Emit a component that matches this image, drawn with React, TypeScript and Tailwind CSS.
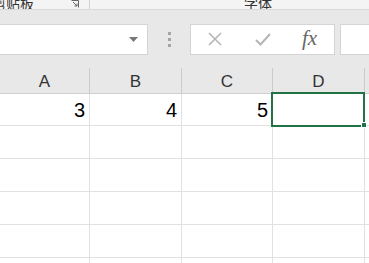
import React from "react";

const cols = [
  { key: "A", width: "w-[90px]", value: "3" },
  { key: "B", width: "w-[92px]", value: "4" },
  { key: "C", width: "w-[91px]", value: "5" },
  { key: "D", width: "w-[92px]", value: "" },
];

const App: React.FC = () => {
  return (
    <div
      className="relative w-[369px] h-[263px] overflow-hidden bg-white"
      style={{ fontFamily: '"Liberation Sans", "Noto Sans CJK SC", sans-serif' }}
    >
      {/* ribbon bottom edge */}
      <div className="flex h-[10px] items-end overflow-hidden border-b border-[#d9d9d9] bg-[#f4f4f4] text-[14px] leading-[14px] text-[#333]">
        <div className="flex h-full w-[90px] items-end border-r border-[#d2d2d2]">
          <span className="-ml-[8px] mb-[-2px]">剪贴板</span>
          <svg className="ml-[37px] mb-[1px]" width="8" height="8" viewBox="0 0 8 8" fill="none" stroke="#666" strokeWidth="1">
            <path d="M0.5 0.5H7.5V7.5" />
            <path d="M2 2L6 6M3.5 6H6V3.5" />
          </svg>
        </div>
        <span className="ml-[154px] mb-[-2px]">字体</span>
      </div>

      {/* formula bar */}
      <div className="flex h-[58px] items-center bg-[#e8e8e8]">
        <div className="flex h-[31px] w-[148px] items-center justify-end border border-l-0 border-[#d4d4d4] bg-white pr-[9px]">
          <svg width="9" height="5" viewBox="0 0 9 5">
            <path d="M0 0H9L4.5 5Z" fill="#777" />
          </svg>
        </div>
        <div className="flex w-[42px] flex-col items-center gap-[3px]">
          <span className="h-[3px] w-[3px] bg-[#a5a5a5]" />
          <span className="h-[3px] w-[3px] bg-[#a5a5a5]" />
          <span className="h-[3px] w-[3px] bg-[#a5a5a5]" />
        </div>
        <div className="flex h-[31px] w-[145px] items-center border border-[#d4d4d4] bg-white">
          <svg className="ml-[17px]" width="14" height="14" viewBox="0 0 14 14" stroke="#b5b5b5" strokeWidth="1.6">
            <path d="M1 1L13 13M13 1L1 13" />
          </svg>
          <svg className="ml-[33px]" width="16" height="13" viewBox="0 0 16 13" fill="none" stroke="#b5b5b5" strokeWidth="2">
            <path d="M1 7L5.5 11.5L15 1" />
          </svg>
          <span
            className="ml-[31px] text-[21px] italic text-[#666]"
            style={{ fontFamily: '"Liberation Serif", serif' }}
          >
            fx
          </span>
        </div>
        <div className="ml-[5px] h-[31px] flex-1 border border-r-0 border-[#d4d4d4] bg-white" />
      </div>

      {/* column headers */}
      <div className="flex h-[26px] border-b border-[#cfcfcf] bg-[#e8e8e8]">
        {cols.map((c) => (
          <div
            key={c.key}
            className={`${c.width} flex shrink-0 items-end justify-center border-r border-[#cbcbcb] pb-[2px] text-[17px] leading-[18px] text-[#333]`}
          >
            {c.key}
          </div>
        ))}
        <div className="flex-1" />
      </div>

      {/* grid */}
      {[0, 1, 2, 3, 4, 5].map((r) => (
        <div
          key={r}
          className={`flex ${r === 0 ? "h-[32px]" : "h-[33px]"} border-b border-[#e1e1e1]`}
        >
          {cols.map((c) => (
            <div
              key={c.key}
              className={`${c.width} flex shrink-0 items-center justify-end border-r border-[#e1e1e1] pr-[4px] text-[20px] text-black`}
            >
              {r === 0 ? c.value : ""}
            </div>
          ))}
          <div className="flex-1" />
        </div>
      ))}

      {/* selected cell D1 */}
      <div className="pointer-events-none absolute left-[271px] top-[92px] h-[35px] w-[94px] border-2 border-[#217346]" />
      <div className="pointer-events-none absolute left-[361px] top-[122px] h-[6px] w-[6px] border border-white bg-[#217346]" />
    </div>
  );
};

export default App;
